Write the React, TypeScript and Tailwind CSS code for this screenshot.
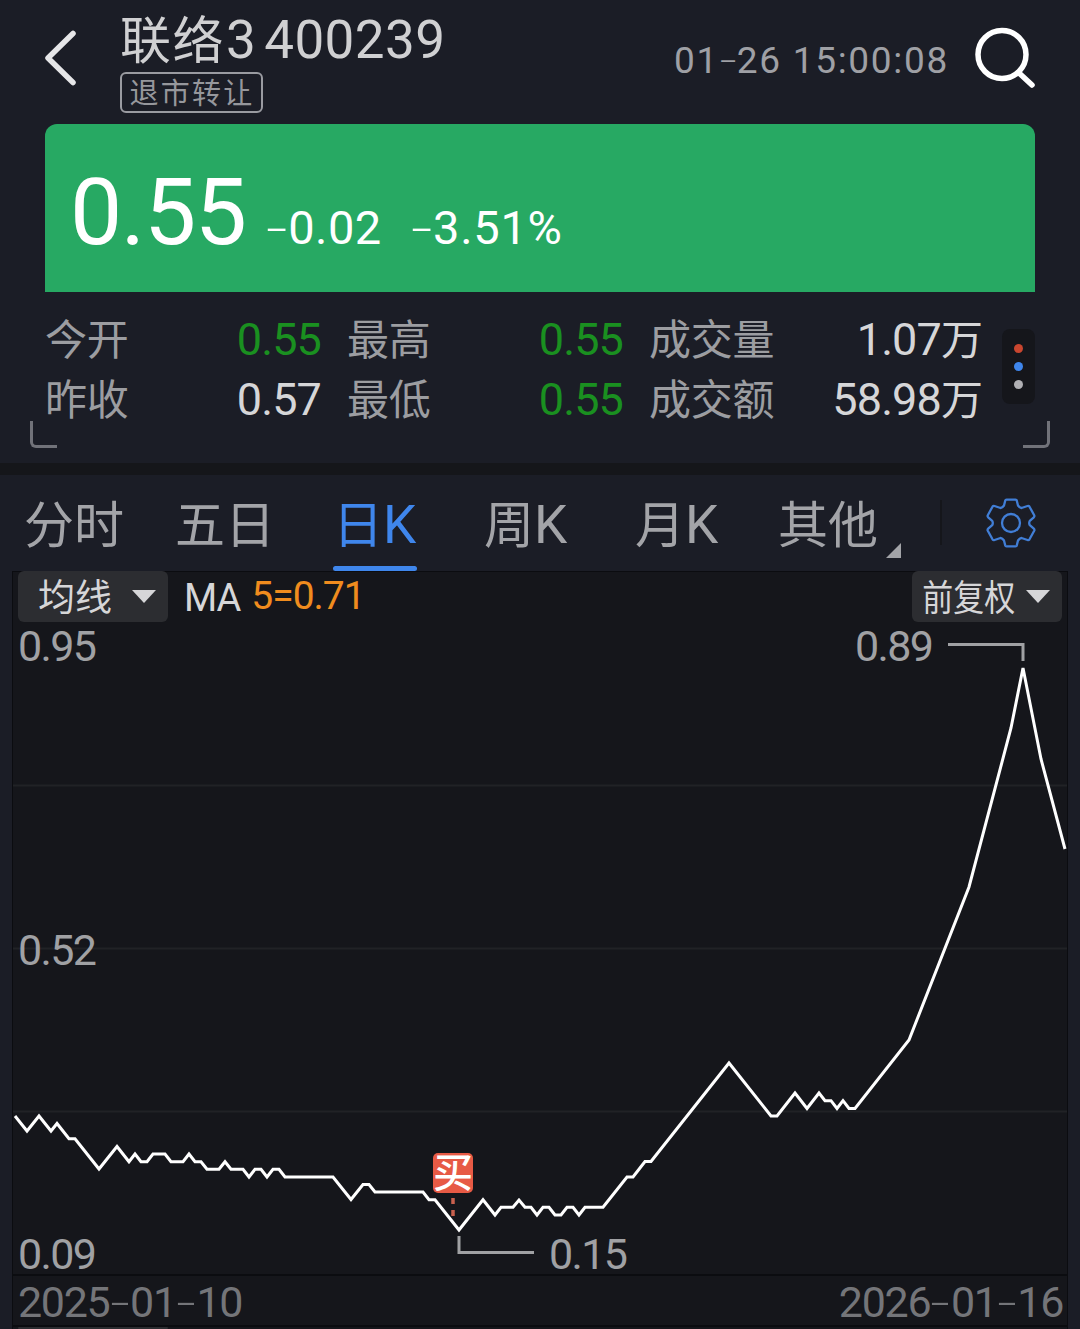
import { ReactNode } from 'react';

const quotes = [
  { label: '今开', value: '0.55', tone: 'text-[#1a9020]' },
  { label: '最高', value: '0.55', tone: 'text-[#1a9020]' },
  { label: '成交量', value: '1.07万', tone: 'text-[#d6d6d8]' },
  { label: '昨收', value: '0.57', tone: 'text-[#d6d6d8]' },
  { label: '最低', value: '0.55', tone: 'text-[#1a9020]' },
  { label: '成交额', value: '58.98万', tone: 'text-[#d6d6d8]' },
];

const tabs = ['分时', '五日', '日K', '周K', '月K'];

// x / y of every turn of the price line
const line: [number, number][] = [
  [15, 1116], [27, 1131], [39, 1116], [51, 1131], [57, 1123.5], [69, 1138.7], [75, 1138.7], [99, 1169],
  [117, 1146.5], [129, 1161.7], [135, 1154], [141, 1161.7], [147, 1161.7], [153, 1154], [165, 1154],
  [171, 1161.7], [183, 1161.7], [189, 1154], [195, 1161.7], [201, 1161.7], [207, 1169.3], [219, 1169.3],
  [225, 1161.7], [231, 1169.3], [243, 1169.3], [249, 1177], [255, 1169.3], [261, 1169.3], [267, 1177],
  [273, 1169.3], [279, 1169.3], [285, 1177], [333, 1177], [351, 1199.5], [363, 1184.5], [369, 1184.5],
  [375, 1192], [423, 1192], [429, 1199.7], [435, 1199.7], [459, 1230], [483, 1199.7], [495, 1215],
  [501, 1207.3], [513, 1207.3], [519, 1200], [525, 1207.3], [531, 1207.3], [537, 1215], [543, 1207.3],
  [549, 1207.3], [555, 1215], [561, 1215], [567, 1207.3], [573, 1207.3], [579, 1215], [585, 1207.3],
  [603, 1207.3], [627, 1177], [633, 1177], [645, 1161.5], [651, 1161.5], [729, 1063], [771, 1116],
  [777, 1116], [795, 1093], [807, 1108.5], [819, 1093], [825, 1100.7], [831, 1100.7], [837, 1108.5],
  [843, 1100.7], [849, 1108.5], [855, 1108.5], [909, 1040], [969, 887], [1011, 728], [1023, 668],
  [1041, 759], [1065, 849],
];

// The hyphen is drawn wide, on the width of a digit
function Num({ children }: { children: string }) {
  return (
    <>
      {children.split(/(-)/).map((part, i) =>
        part === '-' ? (
          <span key={i} className="inline-block w-[0.48em] text-center font-light tracking-normal">
            <span className="inline-block scale-x-160">-</span>
          </span>
        ) : (
          part
        ),
      )}
    </>
  );
}

function Chip({ children }: { children: ReactNode }) {
  return (
    <button className="flex h-[51px] w-[150px] items-center justify-between rounded-md bg-[#2c2d31] pr-3 text-[#d6d6d8]">
      {children}
      <svg width="24" height="13" viewBox="0 0 24 13">
        <path d="M0 0h24L12 13z" fill="#d6d6d8" />
      </svg>
    </button>
  );
}

export default function App() {
  return (
    <div className="flex h-[1329px] w-[1080px] flex-col overflow-hidden bg-[#1b1d26] font-[Roboto,'Noto_Sans_CJK_SC',sans-serif] whitespace-nowrap">
      {/* Header */}
      <header className="flex h-[124px] shrink-0 pl-[45px] pr-[44px]">
        <svg className="mt-[30px]" width="32" height="56" viewBox="0 0 32 56">
          <path d="M28 3.5L3 28l25 24.500" fill="none" stroke="#e6e6e8" strokeWidth="5.500" strokeLinecap="round" strokeLinejoin="round" />
        </svg>
        <div className="ml-[43px] flex flex-col items-start pt-2">
          <h1 className="flex h-16 items-center text-[53px] leading-[64px] tracking-[0.4px] text-[#d0d0d2]">
            <span className="pt-[3px] text-[51px] tracking-[1.500px]">联络</span>
            <span className="ml-px">3</span>
            <span className="ml-2">400239</span>
          </h1>
          <span className="flex h-[41px] w-[143px] items-center justify-center rounded-md border-2 border-[#9a9ba1] pt-1 pl-px text-[29px] leading-[37px] tracking-[2.200px] text-[#96979c]">
            退市转让
          </span>
        </div>
        <time className="mt-[37px] ml-auto text-[37px] leading-[48px] tracking-[1.700px] text-[#9fa0a5]">
          <Num>01-26 15:00:08</Num>
        </time>
        <svg className="mt-[26px] ml-[23px]" width="64" height="64" viewBox="0 0 64 64">
          <g fill="none" stroke="#ffffff" strokeWidth="5.500" strokeLinecap="round">
            <circle cx="30" cy="28.500" r="24" />
            <path d="M46.500 46.500L60 59" />
          </g>
        </svg>
      </header>

      {/* Price */}
      <section className="mx-[45px] flex h-[168px] shrink-0 items-baseline rounded-t-xl bg-[#27a963] pl-[25px] text-white">
        <span className="text-[93px] leading-[178px] tracking-[-1.400px]">0.55</span>
        <span className="ml-[20px] text-[47px] tracking-[0.4px]"><Num>-0.02</Num></span>
        <span className="ml-[29px] text-[47px] tracking-[0.7px]"><Num>-3.51%</Num></span>
      </section>

      {/* Quotes */}
      <section className="flex h-[171px] shrink-0 flex-col">
        <div className="flex pl-[45px] pt-[18px]">
          <div className="grid w-[937px] grid-cols-[276px_276px_333px] gap-x-[26px]">
            {quotes.map((q) => (
              <div key={q.label} className="flex h-[60px] items-center justify-between">
                <span className="pt-[2px] text-[42px] leading-[60px] tracking-[-0.2px] text-[#9c9da1]">{q.label}</span>
                <span className={`text-[45px] leading-[60px] tracking-[-0.9px] ${q.tone}`}>
                  {q.value.replace('万', '')}
                  {q.value.endsWith('万') && <span className="text-[42px] leading-none">万</span>}
                </span>
              </div>
            ))}
          </div>
          <div className="mt-[19px] ml-[20px] flex h-[75px] w-[33px] flex-col items-center justify-center gap-[9px] rounded-lg bg-[#15161b]">
            <i className="size-[9px] rounded-full bg-[#c9462f]" />
            <i className="size-[9px] rounded-full bg-[#3f86ec]" />
            <i className="size-[9px] rounded-full bg-[#b0b0b4]" />
          </div>
        </div>
        <div className="-mt-[9px] flex justify-between px-[30px]">
          <i className="h-[27px] w-[27px] rounded-bl-md border-b-3 border-l-3 border-[#717279]" />
          <i className="h-[27px] w-[27px] rounded-br-md border-b-3 border-r-3 border-[#717279]" />
        </div>
      </section>
      <div className="h-3 shrink-0 bg-[#15161a]" />

      {/* Tabs */}
      <nav className="flex h-[96px] shrink-0 pl-[24px] text-[50px] leading-[102px] text-[#a3a4a8]">
        <div className="grid grid-cols-[151px_151px_151px_151px_148px]">
          {tabs.map((t) => (
            <div key={t} className={t === '日K' ? 'ml-[7px] flex w-[84px] flex-col justify-between text-[#3f86ec]' : t.endsWith('K') ? 'ml-[7px]' : ''}>
              <span className="block h-[91px]">
                {t.replace('K', '')}
                {t.endsWith('K') && <span className="text-[53px] leading-none">K</span>}
              </span>
              {t === '日K' && <i className="block h-[5px] rounded-full bg-[#3f86ec]" />}
            </div>
          ))}
        </div>
        <span className="ml-[2px]">其他</span>
        <svg className="mt-[68px] ml-[8px]" width="15" height="15" viewBox="0 0 15 15">
          <path d="M15 0v15H0z" fill="#a3a4a8" />
        </svg>
        <i className="mt-[25px] ml-[39px] h-[45px] w-0.5 bg-[#15161b]" />
        <svg className="mt-[22px] ml-[43px]" width="52" height="52" viewBox="-26 -26 52 52">
          <g fill="none" stroke="#417ed6" strokeWidth="2.300" strokeLinejoin="round">
            <path d="M-4.500 -23.300H4.500Q5.500 -23.300 5.800 -22.300L7 -17.500Q8.500 -15.300 10.500 -15L16.500 -17Q17.800 -17.400 18.500 -16.300L23.200 -7.800Q23.800 -6.600 22.800 -5.700L18.800 -2.200Q17.600 0 18.800 2.200L22.800 5.700Q23.800 6.600 23.200 7.800L18.500 16.300Q17.800 17.400 16.500 17L10.500 15Q8.500 15.300 7 17.500L5.800 22.300Q5.500 23.300 4.500 23.300H-4.500Q-5.500 23.300 -5.800 22.300L-7 17.500Q-8.500 15.300 -10.500 15L-16.500 17Q-17.800 17.400 -18.500 16.300L-23.200 7.800Q-23.800 6.600 -22.800 5.700L-18.800 2.200Q-17.600 0 -18.800 -2.200L-22.800 -5.700Q-23.800 -6.600 -23.200 -7.800L-18.500 -16.300Q-17.800 -17.400 -16.500 -17L-10.500 -15Q-8.500 -15.300 -7 -17.500L-5.800 -22.300Q-5.500 -23.300 -4.500 -23.300Z" />
            <circle r="9" />
          </g>
        </svg>
      </nav>

      {/* Chart */}
      <main className="mx-3 flex h-[758px] w-[1056px] shrink-0 flex-col border-x border-t border-[#0b0c10] bg-[#15161b]">
        <div className="-mt-px flex h-[51px] shrink-0 items-center pl-[5px] pr-[5px]">
          <Chip>
            <span className="pt-1 pl-5 text-[37px]">均线</span>
          </Chip>
          <span className="ml-4 pt-1 text-[38px] tracking-[-1px] text-[#d6d6d8]">MA</span>
          <span className="mr-auto ml-[11px] text-[39px] tracking-[-1px] text-[#f08c1e]">5=0.71</span>
          <Chip>
            <span className="w-[94px] origin-left scale-x-86 pt-1 pl-3 text-[36px]">前复权</span>
          </Chip>
        </div>
        <svg className="shrink-0 overflow-visible" width="1054" height="652" viewBox="13 622 1054 652">
          <g stroke="#212226" strokeWidth="2">
            <path d="M13 785.500H1067M13 948.500H1067M13 1111.500H1067" />
          </g>
          <g fill="#a0a1a4" fontSize="43" letterSpacing="-1.600">
            <text x="18" y="660.500">0.95</text>
            <text x="18" y="965">0.52</text>
            <text x="18" y="1269">0.09</text>
            <text x="855" y="661">0.89</text>
            <text x="549" y="1269">0.15</text>
          </g>
          <path d="M948 644.500H1023V661M459 1236V1252.500H534" fill="none" stroke="#a0a1a4" strokeWidth="3" />
          <polyline points={line.map((p) => p.join(',')).join(' ')} fill="none" stroke="#ffffff" strokeWidth="3" />
          <path d="M453 1198V1217" stroke="#c8604e" strokeWidth="3.500" strokeDasharray="6 6" />
          <rect x="433" y="1153" width="40" height="40" rx="5" fill="#e75a45" />
          <text x="453" y="1186.500" textAnchor="middle" fontSize="40" fontWeight="500" fill="#ffffff">买</text>
        </svg>
        <div className="flex h-[53px] shrink-0 items-center justify-between border-y-2 border-[#0b0c10] pt-[3px] pr-[4px] pl-[5px] text-[43px] leading-[46px] tracking-[-1.300px] text-[#747579]">
          <span><Num>2025-01-10</Num></span>
          <span><Num>2026-01-16</Num></span>
        </div>
        <div className="ml-[5px] h-[51px] w-[150px] rounded-md bg-[#2c2d31]" />
      </main>
    </div>
  );
}
